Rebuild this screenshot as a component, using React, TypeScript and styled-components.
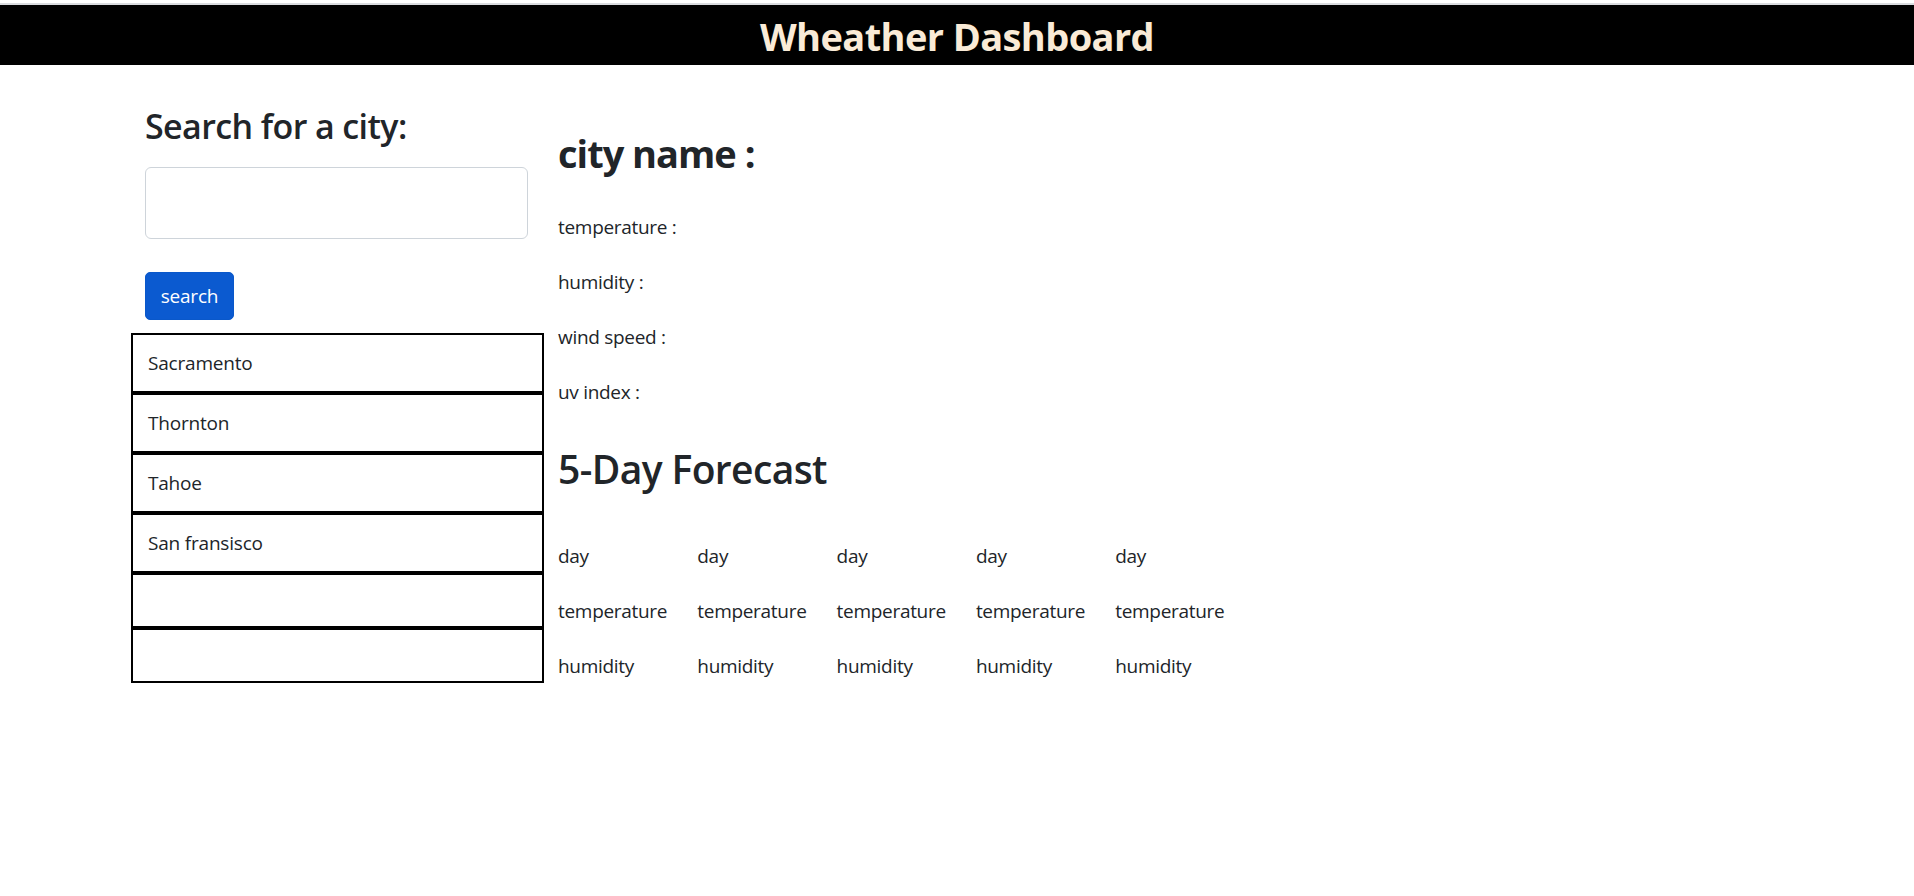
import React from "react";
import styled, { createGlobalStyle } from "styled-components";

const Global = createGlobalStyle`
  html, body { margin: 0; padding: 0; background: #ffffff; }
  body {
    font-family: "Open Sans", "Noto Sans", "Liberation Sans", sans-serif;
    color: #212529;
    font-size: 19px;
    line-height: 30px;
  }
  * { box-sizing: border-box; }
`;

const Page = styled.div`
  width: 1914px;
  min-height: 896px;
  padding-top: 3px;
`;

const Header = styled.header`
  height: 62px;
  border-top: 2px solid #dadce0;
  background: #000000;
  display: flex;
  align-items: center;
  justify-content: center;
`;

const Title = styled.h1`
  margin: 2px 0 0;
  color: #faebd7;
  font-size: 38px;
  font-weight: 700;
  line-height: 48px;
  letter-spacing: -0.6px;
`;

const Container = styled.main`
  display: flex;
  padding-left: 131px;
`;

const Sidebar = styled.section`
  width: 412px;
  display: flex;
  flex-direction: column;
`;

const SideInner = styled.div`
  padding: 0 16px 0 14px;
  display: flex;
  flex-direction: column;
  align-items: flex-start;
`;

const SideHeading = styled.h3`
  margin: 40px 0 0;
  font-size: 34px;
  font-weight: 600;
  line-height: 42px;
  letter-spacing: -0.6px;
`;

const SearchInput = styled.input`
  margin-top: 20px;
  width: 383px;
  height: 72px;
  border: 1px solid #ced4da;
  border-radius: 6px;
  font-family: inherit;
  font-size: 20px;
  padding: 0 15px;
`;

const SearchButton = styled.button`
  margin-top: 33px;
  width: 89px;
  height: 48px;
  border: 1px solid #0a58ca;
  border-radius: 5px;
  background: #0b5ad0;
  color: #ffffff;
  font-family: inherit;
  font-size: 19px;
  line-height: 30px;
  letter-spacing: -0.2px;
  padding: 0;
`;

const CityList = styled.ul`
  list-style: none;
  margin: 13px 0 0;
  padding: 0;
  width: 413px;
`;

const CityItem = styled.li<{ $empty?: boolean }>`
  border: 2px solid #000000;
  padding: 13px 15px;
  height: ${(p) => (p.$empty ? "55px" : "60px")};
  font-size: 19px;
  line-height: 30px;
  letter-spacing: -0.2px;
`;

const Content = styled.section`
  margin-left: 15px;
  display: flex;
  flex-direction: column;
`;

const CityName = styled.h2`
  margin: 64px 0 0;
  font-size: 38px;
  font-weight: 700;
  line-height: 48px;
  letter-spacing: -1px;
`;

const StatList = styled.div`
  margin-top: 35px;
  display: flex;
  flex-direction: column;
  gap: 25px;
`;

const Stat = styled.p`
  margin: 0;
  font-size: 19px;
  line-height: 30px;
  letter-spacing: -0.3px;
`;

const ForecastHeading = styled.h2`
  margin: 38px 0 0;
  font-size: 39px;
  font-weight: 600;
  line-height: 48px;
  letter-spacing: -0.6px;
`;

const ForecastGrid = styled.div`
  margin-top: 48px;
  display: grid;
  grid-template-columns: repeat(5, 139.3px);
  row-gap: 25px;
`;

const ForecastCell = styled.div`
  font-size: 19px;
  line-height: 30px;
  letter-spacing: -0.3px;
  white-space: nowrap;
`;

const cities = ["Sacramento", "Thornton", "Tahoe", "San fransisco", "", ""];
const stats = ["temperature :", "humidity :", "wind speed :", "uv index :"];
const rows = ["day", "temperature", "humidity"];

export default function App() {
  return (
    <Page>
      <Global />
      <Header>
        <Title>Wheather Dashboard</Title>
      </Header>
      <Container>
        <Sidebar>
          <SideInner>
            <SideHeading>Search for a city:</SideHeading>
            <SearchInput type="text" />
            <SearchButton type="button">search</SearchButton>
          </SideInner>
          <CityList>
            {cities.map((c, i) => (
              <CityItem key={i} $empty={!c}>
                {c}
              </CityItem>
            ))}
          </CityList>
        </Sidebar>
        <Content>
          <CityName>city name :</CityName>
          <StatList>
            {stats.map((s) => (
              <Stat key={s}>{s}</Stat>
            ))}
          </StatList>
          <ForecastHeading>5-Day Forecast</ForecastHeading>
          <ForecastGrid>
            {rows.map((r) =>
              [0, 1, 2, 3, 4].map((i) => (
                <ForecastCell key={r + i}>{r}</ForecastCell>
              ))
            )}
          </ForecastGrid>
        </Content>
      </Container>
    </Page>
  );
}
